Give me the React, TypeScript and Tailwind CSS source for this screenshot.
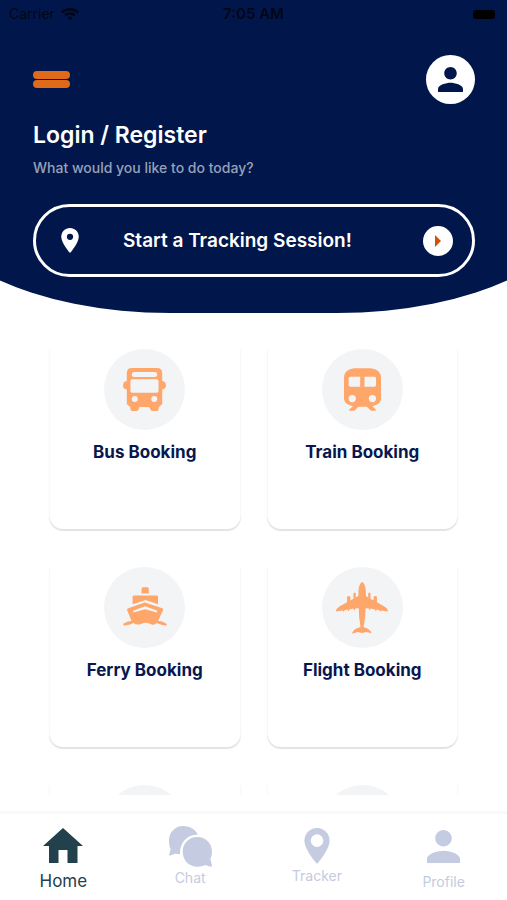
import type { ReactNode } from "react";

function PersonIcon({ className }: { className: string }) {
  return (
    <svg viewBox="4 4 16 16" fill="currentColor" aria-hidden="true" className={className}>
      <path d="M12 12c2.21 0 4-1.79 4-4s-1.79-4-4-4-4 1.79-4 4 1.79 4 4 4zm0 2c-2.67 0-8 1.34-8 4v2h16v-2c0-2.66-5.33-4-8-4z" />
    </svg>
  );
}

function PinIcon({ className, hole }: { className: string; hole: number }) {
  return (
    <svg viewBox="5 2 14 20" aria-hidden="true" className={className}>
      <path fill="currentColor" d="M12 2C8.13 2 5 5.13 5 9c0 5.25 7 13 7 13s7-7.75 7-13c0-3.87-3.13-7-7-7z" />
      <circle cx="12" cy="9" r={hole} className={hole > 3 ? "fill-white" : "fill-[#01174b]"} />
    </svg>
  );
}

function WifiIcon() {
  return (
    <svg viewBox="0 0 18 13" fill="currentColor" aria-label="Wi-Fi" className="h-[13px] w-[18px]">
      <path d="M9 0C5.600 0 2.400 1.300 0 3.600l1.700 1.800C3.700 3.500 6.200 2.500 9 2.500s5.300 1 7.300 2.900L18 3.600C15.600 1.300 12.400 0 9 0z" />
      <path d="M9 4.300c-2.200 0-4.200.8-5.700 2.300L5 8.400c1.100-1 2.500-1.600 4-1.600s2.900.6 4 1.600l1.700-1.800C13.200 5.100 11.200 4.300 9 4.300z" />
      <path d="M9 8.500c-1 0-2 .4-2.700 1.100L9 12.600l2.700-3C11 8.900 10 8.500 9 8.500z" />
    </svg>
  );
}

function BusIcon() {
  return (
    <svg viewBox="253 98 129 130" fill="currentColor" aria-hidden="true" className="h-[43px] w-[43px]">
      <path
        fillRule="evenodd"
        d="M279 98H355Q371 98 371 114V138H375Q382 140 382 148V155Q381 161 371 163V207L360 217V223Q360 228 355 228H341Q336 228 335 223L332 216H302L300 223Q299 228 294 228H280Q275 228 275 223V217L264 207V163Q253 161 253 155V148Q253 140 260 138H264V114Q264 98 279 98ZM286 110Q279 110 279 117Q279 125 286 125H349Q356 125 356 117Q356 110 349 110ZM281 132Q275 132 275 138V167Q275 173 281 173H354Q360 173 360 167V138Q360 132 354 132ZM288 183A9 9 0 1 0 288 201A9 9 0 1 0 288 183ZM347 183A9 9 0 1 0 347 201A9 9 0 1 0 347 183Z"
      />
    </svg>
  );
}

function TrainIcon() {
  return (
    <svg viewBox="254 96 112 129" fill="currentColor" aria-hidden="true" className="h-[43px] w-[37px]">
      <path
        fillRule="evenodd"
        d="M285 96H335Q366 100 366 124V190Q364 205 340 211L350 221V225H336L323 213H297L286 225H270V221L281 211Q256 205 254 190V124Q254 100 285 96ZM273 122Q268 122 268 127V147Q268 152 273 152H303V122ZM316 122V152H346Q351 152 351 147V127Q351 122 346 122ZM279 177A11 11 0 1 0 279 199A11 11 0 1 0 279 177ZM340 177A11 11 0 1 0 340 199A11 11 0 1 0 340 177Z"
      />
    </svg>
  );
}

function FerryIcon() {
  return (
    <svg viewBox="249 109 131 130" fill="currentColor" aria-hidden="true" className="h-[43px] w-[44px]">
      <path d="M304 132V118Q304 113 309 113H321Q326 113 326 118V132Z" />
      <path d="M277 164V142Q277 138 281 138H350Q354 138 354 142V164L316 151Z" />
      <path
        fillRule="evenodd"
        d="M314 159L367 176Q371 178 369 182L354 214Q365 214 380 223V228Q366 229 350 221Q342 229 331 224Q316 216 304 223Q290 229 280 221Q265 229 249 228V223Q263 214 274 215L260 181Q260 178 264 176ZM278 184L280 189L315 179L350 189L352 184L315 170Z"
      />
    </svg>
  );
}

function PlaneIcon() {
  return (
    <svg viewBox="233 96 155 155" fill="currentColor" aria-hidden="true" className="h-[52px] w-[52px]">
      <path d="M311 96C318 99 321 110 322 122V137L329 142V130Q332 125 336 130V146L345 151V140Q350 135 355 140V156L377 169Q387 174 388 184L367 181L366 185L362 180L354 178L352 184L349 178L336 175L334 182L331 175L321 174L320 200L315 230C325 233 337 239 339 249L323 245L311 248L298 245L281 250C283 239 295 233 306 230L302 200L301 174L291 175L288 182L285 175L273 178L270 184L267 178L259 180L255 185L253 181L233 184Q234 174 243 169L266 156V140Q271 135 276 140V151L285 146V130Q289 125 292 130V142L300 137V122C301 110 304 99 311 96Z" />
    </svg>
  );
}

function HomeIcon() {
  return (
    <svg viewBox="0 0 40 35" fill="currentColor" aria-hidden="true" className="h-[35px] w-10">
      <path d="M20 0L40 18H34.500V35H24.500V22H15.500V35H6V18H0Z" />
    </svg>
  );
}

function ChatIcon() {
  return (
    <svg viewBox="507 168 129 123" fill="currentColor" aria-hidden="true" className="mb-px h-[41px] w-[43px]">
      <path d="M550 168C571 168 587 179 593 194C562 193 540 216 540 249L541 253C533 252 527 250 523 252L509 257Q507 256 508 253L512 237C508 229 507 222 507 212C507 187 525 168 550 168Z" />
      <path d="M592 201C617 201 636 220 636 245C636 253 634 260 631 267L636 286Q636 291 632 290L616 285C608 289 601 290 592 290C567 290 548 270 548 245C548 220 567 201 592 201Z" />
    </svg>
  );
}

function BookingCard({ title, icon }: { title?: string; icon?: ReactNode }) {
  return (
    <button
      type="button"
      className="flex h-[180px] flex-col items-center rounded-b-[14px] border-x border-[#f8f8f9] bg-white shadow-[0_2px_1px_#e3e3e5]"
    >
      <span className="flex size-[81px] shrink-0 items-center justify-center rounded-full bg-[#f2f4f6] text-[#ffa66b]">
        {icon}
      </span>
      <span className="mt-[10px] text-[17px] leading-6 font-bold text-[#08174f]">{title}</span>
    </button>
  );
}

function Tab({ label, icon, active = false }: { label: string; icon: ReactNode; active?: boolean }) {
  return (
    <a
      href="#"
      aria-current={active ? "page" : undefined}
      className={
        active
          ? "flex flex-col items-center gap-2 pt-[14px] text-[17px] leading-5 text-[#23414d]"
          : "flex flex-col items-center pt-3 text-sm leading-5 text-[#c5cbe1]"
      }
    >
      {icon}
      <span>{label}</span>
    </a>
  );
}

export default function App() {
  return (
    <div className="flex h-screen flex-col overflow-hidden bg-white font-['Inter',sans-serif]">
      <header className="shrink-0 overflow-hidden">
        <div className="-mx-20 bg-[#01174b] px-20 pb-9 [border-radius:0_0_250px_250px/0_0_122px_122px]">
          <div className="grid h-7 grid-cols-3 items-center px-[9px] text-sm text-[#020617]">
            <span className="flex items-center gap-[6px]">
              Carrier
              <WifiIcon />
            </span>
            <span className="text-center text-[15px] font-semibold">7:05 AM</span>
            <span className="mr-[3px] h-[9px] w-[22px] justify-self-end rounded-[3px] bg-black" />
          </div>

          <div className="pt-[27px] pr-8 pl-[33px]">
            <div className="flex items-center justify-between">
              <button type="button" aria-label="Menu" className="flex w-[37px] flex-col gap-px">
                <span className="h-2 rounded-full bg-[#de6a1a]" />
                <span className="h-2 rounded-full bg-[#de6a1a]" />
              </button>
              <button
                type="button"
                aria-label="Account"
                className="flex size-[49px] items-center justify-center rounded-full bg-white text-[#01174b]"
              >
                <PersonIcon className="size-[25px]" />
              </button>
            </div>

            <h1 className="mt-4 text-[23px] leading-[30px] font-semibold text-white">
              <a href="#">Login / Register</a>
            </h1>
            <p className="mt-2 text-sm leading-5 font-medium text-[#98a1b8]">What would you like to do today?</p>

            <button
              type="button"
              className="mt-[26px] flex h-[73px] w-full items-center rounded-full border-[3px] border-white pr-[19px] pl-[25px] text-white"
            >
              <PinIcon className="h-[25px] w-[18px]" hole={2.5} />
              <span className="ml-11 text-[19px] leading-7 font-semibold">Start a Tracking Session!</span>
              <span className="ml-auto flex size-[30px] items-center justify-center rounded-full bg-white text-[#cf5207]">
                <svg viewBox="0 0 6 12" fill="currentColor" aria-hidden="true" className="h-3 w-[6px]">
                  <path d="M0 0L6 6L0 12Z" />
                </svg>
              </span>
            </button>
          </div>
        </div>
      </header>

      <main className="mt-9 mb-4 min-h-0 flex-1 overflow-y-auto px-[49px] [scrollbar-width:none]">
        <div className="grid grid-cols-2 gap-x-[26px] gap-y-[38px] pb-9">
          <BookingCard title="Bus Booking" icon={<BusIcon />} />
          <BookingCard title="Train Booking" icon={<TrainIcon />} />
          <BookingCard title="Ferry Booking" icon={<FerryIcon />} />
          <BookingCard title="Flight Booking" icon={<PlaneIcon />} />
          <BookingCard />
          <BookingCard />
        </div>
      </main>

      <nav className="grid h-[89px] shrink-0 grid-cols-4 border-t-3 border-[#f9f9fa]">
        <Tab label="Home" active icon={<HomeIcon />} />
        <Tab label="Chat" icon={<ChatIcon />} />
        <Tab label="Tracker" icon={<PinIcon className="mt-[2px] mb-[2px] h-9 w-[26px]" hole={3.5} />} />
        <Tab label="Profile" icon={<PersonIcon className="mt-1 mb-[9px] size-[33px]" />} />
      </nav>
    </div>
  );
}
